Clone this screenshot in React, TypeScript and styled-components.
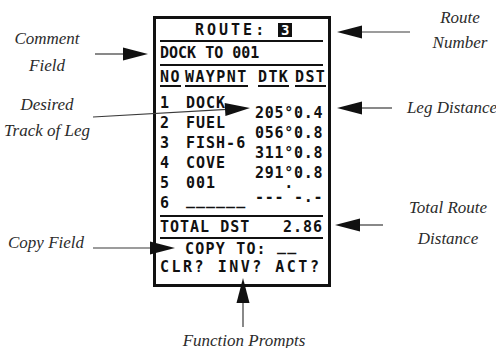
import React from 'react';
import styled, { createGlobalStyle } from 'styled-components';

type Point = [number, number];

interface Arrow {
  from: Point;
  to: Point;
}

interface Label {
  lines: string[];
  x: number;
  y: number;
  lh?: number;
}

const arrows: Arrow[] = [
  { from: [95, 54], to: [148, 54] },
  { from: [93, 117], to: [250, 108] },
  { from: [410, 32], to: [337, 32] },
  { from: [392, 108], to: [337, 108] },
  { from: [383, 225], to: [335, 225] },
  { from: [93, 248], to: [175, 248] },
  { from: [243, 327], to: [243, 278] }
];

const labels: Label[] = [
  { lines: ['Comment', 'Field'], x: 47, y: 52, lh: 27 },
  { lines: ['Desired', 'Track of Leg'], x: 47, y: 118, lh: 26 },
  { lines: ['Route', 'Number'], x: 460, y: 30, lh: 25 },
  { lines: ['Leg Distance'], x: 452, y: 108 },
  { lines: ['Total Route', 'Distance'], x: 448, y: 223, lh: 31 },
  { lines: ['Copy Field'], x: 46, y: 243 },
  { lines: ['Function Prompts'], x: 244, y: 341 }
];

const waypoints = [
  { no: '1', name: 'DOCK' },
  { no: '2', name: 'FUEL' },
  { no: '3', name: 'FISH-6' },
  { no: '4', name: 'COVE' },
  { no: '5', name: '001' }
];

const legs = ['205°0.4', '056°0.8', '311°0.8', '291°0.8'];

// arrow head + shaft that stops at the head base
const arrowGeometry = ({ from, to }: Arrow, len = 25, half = 6.5) => {
  const [x1, y1] = from;
  const [x2, y2] = to;
  const d = Math.hypot(x2 - x1, y2 - y1);
  const ux = (x2 - x1) / d;
  const uy = (y2 - y1) / d;
  const bx = x2 - ux * len;
  const by = y2 - uy * len;
  const px = -uy * half;
  const py = ux * half;
  return {
    base: [bx + ux * 2, by + uy * 2] as Point,
    head: `${x2},${y2} ${bx + px},${by + py} ${bx - px},${by - py}`
  };
};

const App = () => (
  <>
    <GlobalStyle />
    <Canvas>
      <Screen>
        <TitleRow>
          ROUTE:
          <RouteNumber>3</RouteNumber>
        </TitleRow>
        <Rule />
        <CommentRow>DOCK TO 001</CommentRow>
        <Rule />
        <HeaderRow>
          <HeadCell>NO</HeadCell>
          <HeadCell>WAYPNT</HeadCell>
          <HeadCell>DTK</HeadCell>
          <HeadCell>DST</HeadCell>
        </HeaderRow>
        <Table>
          <WaypointList>
            {waypoints.map(w => (
              <WaypointRow key={w.no}>
                <span>{w.no}</span>
                <span>{w.name}</span>
              </WaypointRow>
            ))}
            <WaypointRow>
              <span>6</span>
              <Blank>______</Blank>
            </WaypointRow>
          </WaypointList>
          <LegList>
            {legs.map(l => (
              <LegRow key={l} $h={20}>{l}</LegRow>
            ))}
            <LegRow $h={8}>{'   ·'}</LegRow>
            <LegRow $h={12}>{'--- -.-'}</LegRow>
          </LegList>
        </Table>
        <Rule />
        <TotalRow>
          <span>TOTAL DST</span>
          <span>2.86</span>
        </TotalRow>
        <Rule />
        <CopyRow>
          {'COPY TO: '}
          <Blank>__</Blank>
        </CopyRow>
        <PromptRow>{'CLR? INV? ACT?'}</PromptRow>
      </Screen>

      <Overlay viewBox="0 0 496 348">
        {arrows.map((a, i) => {
          const { base, head } = arrowGeometry(a);
          return (
            <g key={i}>
              <line x1={a.from[0]} y1={a.from[1]} x2={base[0]} y2={base[1]} stroke="#3a3a3a" strokeWidth={1.2} />
              <polygon points={head} fill="#111" />
            </g>
          );
        })}
      </Overlay>

      {labels.map(l => (
        <Callout key={l.lines[0]} $x={l.x} $y={l.y} $lh={l.lh}>
          {l.lines.map(line => (
            <div key={line}>{line}</div>
          ))}
        </Callout>
      ))}
    </Canvas>
  </>
);

const GlobalStyle = createGlobalStyle`
  html, body {
    margin: 0;
    padding: 0;
    background: #fff;
  }
`;

const Canvas = styled.div`
  position: relative;
  box-sizing: border-box;
  width: 496px;
  height: 348px;
  padding: 16px 0 0 153px;
  overflow: hidden;
  background: #fff;
`;

const Screen = styled.div`
  display: flex;
  flex-direction: column;
  box-sizing: border-box;
  width: 178px;
  height: 271px;
  padding: 0 5px 0 4px;
  border: 3px solid #111;
  background: #fff;
  color: #111;
  font-family: "DejaVu Sans Mono", "Liberation Mono", monospace;
  font-weight: bold;
  font-size: 15px;
  white-space: pre;
`;

const Rule = styled.div`
  flex: none;
  height: 2px;
  background: #111;
`;

const TitleRow = styled.div`
  display: flex;
  align-items: center;
  height: 21px;
  padding-left: 35px;
  letter-spacing: 3px;
`;

const RouteNumber = styled.span`
  display: flex;
  align-items: center;
  justify-content: center;
  width: 14px;
  height: 14px;
  margin-left: 11px;
  background: #111;
  color: #fff;
  font-size: 14px;
  line-height: 14px;
  letter-spacing: 0;
`;

const CommentRow = styled.div`
  display: flex;
  align-items: center;
  height: 22px;
`;

const HeaderRow = styled.div`
  display: grid;
  grid-template-columns: 25px 73px 37px 1fr;
  align-items: start;
  box-sizing: border-box;
  height: 22px;
  padding-top: 3px;
  letter-spacing: 1.4px;
`;

const HeadCell = styled.span`
  justify-self: start;
  line-height: 16px;
  border-bottom: 2px solid #111;
`;

const Table = styled.div`
  display: grid;
  grid-template-columns: 95px 1fr;
  height: 127px;
`;

const WaypointList = styled.div`
  display: flex;
  flex-direction: column;
  padding-top: 5px;
`;

const WaypointRow = styled.div`
  display: grid;
  grid-template-columns: 26px 1fr;
  align-items: center;
  height: 20px;
  letter-spacing: 1px;
`;

// underscores on the LCD sit on the baseline, not below it
const Blank = styled.span`
  display: inline-block;
  transform: translateY(-3px);
`;

const LegList = styled.div`
  display: flex;
  flex-direction: column;
  padding-top: 15px;
`;

const LegRow = styled.div<{ $h: number }>`
  height: ${p => p.$h}px;
  line-height: ${p => p.$h}px;
  letter-spacing: 0.7px;
`;

const TotalRow = styled.div`
  display: flex;
  align-items: center;
  justify-content: space-between;
  height: 20px;
  letter-spacing: 1px;
`;

const CopyRow = styled.div`
  display: flex;
  align-items: center;
  height: 20px;
  padding-left: 25px;
  letter-spacing: 1.2px;
`;

const PromptRow = styled.div`
  display: flex;
  align-items: center;
  height: 16px;
  letter-spacing: 2.5px;
`;

const Overlay = styled.svg`
  position: absolute;
  top: 0;
  left: 0;
  width: 496px;
  height: 348px;
  pointer-events: none;
`;

const Callout = styled.div<{ $x: number; $y: number; $lh?: number }>`
  position: absolute;
  left: ${p => p.$x}px;
  top: ${p => p.$y}px;
  transform: translate(-50%, -50%);
  color: #2b2b2b;
  font-family: "Liberation Serif", "DejaVu Serif", serif;
  font-style: italic;
  font-size: 17px;
  line-height: ${p => p.$lh ?? 24}px;
  text-align: center;
  white-space: nowrap;
`;

export default App;
